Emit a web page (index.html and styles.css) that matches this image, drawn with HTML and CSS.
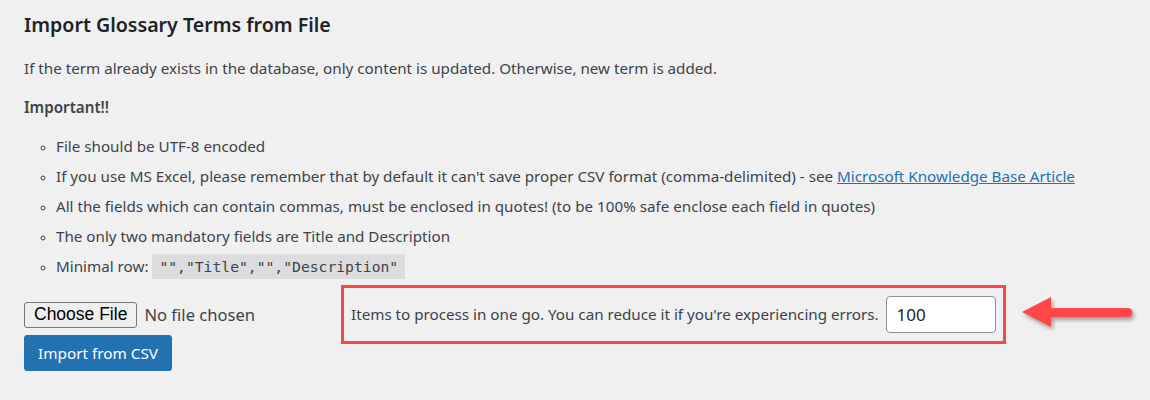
FILE: index.html
```html
<!DOCTYPE html>
<html lang="en">
<head>
  <meta charset="UTF-8">
  <title>Import Glossary Terms from File</title>
  <link rel="stylesheet" href="styles.css">
</head>
<body>
  <div class="wrap">
    <h2 class="title">Import Glossary Terms from File</h2>
    <p>If the term already exists in the database, only content is updated. Otherwise, new term is added.</p>
    <p><strong>Important!!</strong></p>
    <ul class="notes">
      <li>File should be UTF-8 encoded</li>
      <li>If you use MS Excel, please remember that by default it can't save proper CSV format (comma-delimited) - see <a href="#">Microsoft Knowledge Base Article</a></li>
      <li>All the fields which can contain commas, must be enclosed in quotes! (to be 100% safe enclose each field in quotes)</li>
      <li>The only two mandatory fields are Title and Description</li>
      <li>Minimal row: <code>"","Title","","Description"</code></li>
    </ul>

    <form class="import-form">
      <div class="file-row">
        <input type="file" class="file-input">
        <label class="chunk">
          Items to process in one go. You can reduce it if you're experiencing errors.
          <input type="text" class="chunk-input" value="100">
        </label>
      </div>
      <button type="button" class="button-primary">Import from CSV</button>
    </form>

    <svg class="arrow" width="130" height="44" viewBox="0 0 130 44">
      <defs>
        <filter id="shadow" x="-10%" y="-30%" width="130%" height="180%">
          <feDropShadow dx="2" dy="3" stdDeviation="2" flood-color="#000" flood-opacity="0.35"/>
        </filter>
      </defs>
      <g filter="url(#shadow)" fill="#ff4646">
        <path d="M7 20 L36 5 L36 16 L113 16 A4.5 4.5 0 0 1 113 25 L36 25 L36 35 Z"/>
      </g>
    </svg>
  </div>
</body>
</html>
```

FILE: styles.css
```css
html, body {
  margin: 0;
  background: #f0f0f1;
}
body {
  font-family: "Noto Sans", "Open Sans", sans-serif;
  font-size: 15.2px;
  color: #3c434a;
  line-height: 21px;
}
.wrap {
  position: relative;
  padding: 12px 24px 0;
}
.title {
  margin: 0 0 20px;
  font-size: 19.6px;
  font-weight: 600;
  line-height: 26px;
  color: #1d2327;
}
p {
  margin: 0 0 18px;
}
strong {
  font-weight: 600;
}
.notes {
  list-style: circle;
  margin: 0;
  padding-left: 32px;
}
.notes li {
  margin-bottom: 9px;
}
.notes li::marker {
  font-size: 12px;
}
a {
  color: #2271b1;
}
code {
  font-family: "DejaVu Sans Mono", monospace;
  font-size: 14.7px;
  background: #dcdcde;
  padding: 4px 7px;
}
.import-form {
  margin-top: 18px;
}
.file-row {
  display: flex;
  align-items: center;
  gap: 27px;
}
.file-input {
  font-family: "Noto Sans", sans-serif;
  font-size: 16.6px;
  color: #3c434a;
  width: 300px;
}
.file-input::file-selector-button {
  font-family: "Liberation Sans", sans-serif;
  font-size: 17.5px;
  color: #000;
  background: #efefef;
  border: 1px solid #767676;
  border-radius: 3px;
  height: 26px;
  padding: 0 9px;
  margin-right: 7px;
}
.chunk {
  display: flex;
  align-items: center;
  gap: 7px;
  padding: 1px 0;
  outline: 3px solid #ff4646;
  outline-offset: 7px;
}
.chunk-input {
  width: 110px;
  height: 37px;
  box-sizing: border-box;
  border: 1px solid #8c8f94;
  border-radius: 4px;
  background: #fff;
  padding: 0 10px;
  font-family: "Noto Sans", sans-serif;
  font-size: 17px;
  color: #1d2327;
}
.button-primary {
  display: block;
  margin-top: 1px;
  background: #2271b1;
  color: #fff;
  border: 1px solid #2271b1;
  border-radius: 3px;
  padding: 0 13px;
  height: 36px;
  font-family: "Noto Sans", sans-serif;
  font-size: 15.3px;
}
.arrow {
  position: absolute;
  left: 1015px;
  top: 292px;
}
```
